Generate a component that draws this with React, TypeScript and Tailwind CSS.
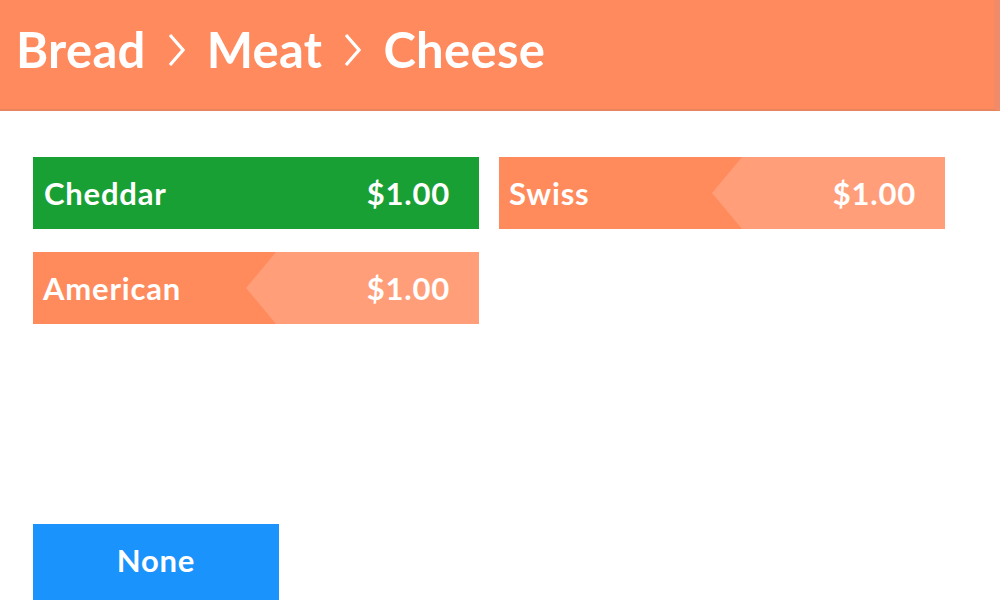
import React from 'react';

type Item = { name: string; price: string; selected?: boolean };

const items: Item[] = [
  { name: 'Cheddar', price: '$1.00', selected: true },
  { name: 'Swiss', price: '$1.00' },
  { name: 'American', price: '$1.00' },
];

const font = { fontFamily: 'Lato, "Open Sans", sans-serif' };

const Chevron = () => (
  <svg width="17" height="34" viewBox="0 0 17 34" className="shrink-0">
    <path d="M2 2 L15 17 L2 32" fill="none" stroke="white" strokeWidth="3.2" strokeLinejoin="miter" />
  </svg>
);

const Card: React.FC<{ item: Item }> = ({ item }) => {
  if (item.selected) {
    return (
      <div className="h-[72px] bg-[#19a034] flex items-center justify-between pl-[11px] pr-[29px] text-white font-bold text-[31px] tracking-[0.8px]">
        <span>{item.name}</span>
        <span>{item.price}</span>
      </div>
    );
  }
  return (
    <div className="relative h-[72px] bg-[#ff8a5c] text-white font-bold text-[31px] tracking-[0.8px] overflow-hidden">
      {/* lighter chevron section on the right */}
      <div className="absolute top-0 bottom-0 left-[213px] right-0 bg-[#ff9e79] [clip-path:polygon(30px_0,100%_0,100%_100%,30px_100%,0_50%)]" />
      <div className="relative h-full flex items-center justify-between pl-[10px] pr-[29px]">
        <span>{item.name}</span>
        <span>{item.price}</span>
      </div>
    </div>
  );
};

export default function App() {
  return (
    <div className="w-[1000px] h-[600px] bg-white overflow-hidden flex flex-col" style={font}>
      <header className="h-[111px] bg-[#ff8a5e] border-b-2 border-[#e98460] border-r-[6px] border-r-[#f08a68] flex items-center pl-[16px] pb-[10px] shrink-0">
        <h1 className="text-white font-bold text-[49px] tracking-[0.3px] flex items-center gap-[22px]">
          <span>Bread</span>
          <Chevron />
          <span>Meat</span>
          <Chevron />
          <span>Cheese</span>
        </h1>
      </header>
      <main className="flex-1 flex flex-col justify-between pl-[33px] pt-[46px]">
        <div className="grid grid-cols-[446px_446px] gap-x-[20px] gap-y-[23px]">
          {items.map((it) => (
            <Card key={it.name} item={it} />
          ))}
        </div>
        <button className="w-[246px] h-[76px] bg-[#1b93fc] text-white font-bold text-[31px] tracking-[0.8px] pb-[3px]">
          None
        </button>
      </main>
    </div>
  );
}
